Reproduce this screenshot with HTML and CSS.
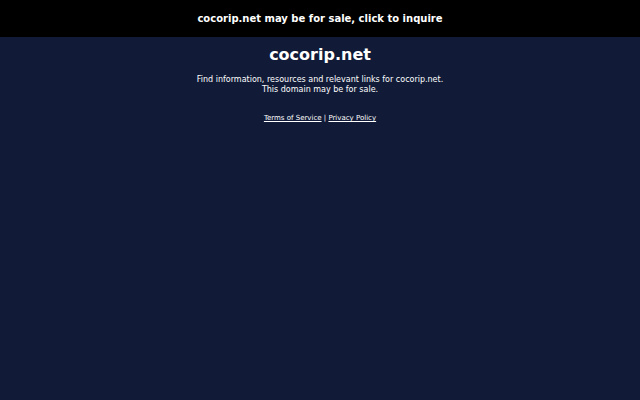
FILE: index.html
```html
<!DOCTYPE html>
<html>
<head>
<meta charset="utf-8">
<link rel="stylesheet" href="styles.css">
</head>
<body>
<div class="bar"><a class="bar-link" href="#">cocorip.net may be for sale, click to inquire</a></div>
<main class="content">
<h1 class="title">cocorip.net</h1>
<p class="desc">Find information, resources and relevant links for cocorip.net.<br>This domain may be for sale.</p>
<p class="links"><a href="#">Terms of Service</a> | <a href="#">Privacy Policy</a></p>
</main>
</body>
</html>
```
FILE: styles.css
```css
html, body {
  margin: 0;
  padding: 0;
  height: 100%;
}
body {
  background: #111b37;
  color: #ffffff;
  font-family: "DejaVu Sans", sans-serif;
}
.bar {
  background: #000000;
  height: 37px;
  display: flex;
  align-items: center;
  justify-content: center;
}
.bar-link {
  color: #ffffff;
  text-decoration: none;
  font-weight: bold;
  font-size: 10px;
}
.content {
  display: flex;
  flex-direction: column;
  align-items: center;
  text-align: center;
}
.title {
  margin: 8px 0 0;
  font-size: 16px;
  font-weight: bold;
  line-height: 20px;
}
.desc {
  margin: 10px 0 0;
  font-size: 8px;
  line-height: 10px;
}
.links {
  margin: 19px 0 0;
  font-size: 7px;
}
.links a {
  color: #ffffff;
}
```
